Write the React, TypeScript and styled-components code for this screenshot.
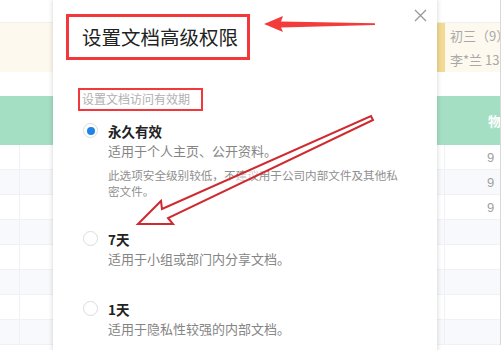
import React from 'react';
import styled, { createGlobalStyle } from 'styled-components';

const GlobalStyle = createGlobalStyle`
   html, body {
      margin: 0;
      padding: 0;
      background: #ffffff;
      overflow: hidden;
   }
   body {
      font-family: "Noto Sans CJK SC", "Noto Sans", "Liberation Sans", sans-serif;
   }
`;

const options = [
   {
      label: '永久有效',
      desc: '适用于个人主页、公开资料。',
      note: '此选项安全级别较低，不建议用于公司内部文件及其他私密文件。',
      checked: true,
   },
   { label: '7天', desc: '适用于小组或部门内分享文档。', checked: false },
   { label: '1天', desc: '适用于隐私性较强的内部文档。', checked: false },
];

const tableRows = ['9', '9', '9', '', '', '', '', ''];

const App = () => {
   return (
      <>
         <GlobalStyle />
         <Screen>
            <Sheet>
               <TopBar />
               <InfoBand>
                  <InfoSpacer />
                  <InfoCard>
                     <InfoLine>初三（9）班</InfoLine>
                     <InfoLine>李*兰 13</InfoLine>
                  </InfoCard>
               </InfoBand>
               <Gap />
               <HeadRow>
                  <HeadCell />
                  <HeadCell />
                  <HeadCell>物理</HeadCell>
               </HeadRow>
               {tableRows.map((v, i) => (
                  <Row key={i} $alt={i % 2 === 1}>
                     <Cell />
                     <Cell />
                     <Cell $value>{v}</Cell>
                  </Row>
               ))}
            </Sheet>

            <Modal>
               <CloseButton aria-label="close">
                  <svg width="13" height="13" viewBox="0 0 13 13">
                     <path d="M1 1 L12 12 M12 1 L1 12" stroke="#9a9a9a" strokeWidth="1.4" fill="none" />
                  </svg>
               </CloseButton>
               <Title>设置文档高级权限</Title>
               <Subtitle>设置文档访问有效期</Subtitle>
               <OptionList>
                  {options.map((o) => (
                     <Option key={o.label}>
                        <Radio $checked={o.checked} />
                        <OptionBody>
                           <OptionLabel>{o.label}</OptionLabel>
                           <OptionDesc>{o.desc}</OptionDesc>
                           {o.note && <OptionNote>{o.note}</OptionNote>}
                        </OptionBody>
                     </Option>
                  ))}
               </OptionList>
            </Modal>

            <Annotations width="501" height="350" viewBox="0 0 501 350">
               <polygon
                  points="264,24 283,16 281,21.5 375,23.3 375,25 281,27.5 283,32"
                  fill="#f23b3b"
               />
               <polygon
                  points="138,224 161,201 162,209 371,116 373,120 168,218 173,224"
                  fill="rgba(255,255,255,0.55)"
                  stroke="#cf2a30"
                  strokeWidth="2"
                  strokeLinejoin="miter"
               />
            </Annotations>
         </Screen>
      </>
   );
};

const Screen = styled.div`
   position: relative;
   width: 501px;
   height: 350px;
   overflow: hidden;
   background: #ffffff;
`;

const Sheet = styled.div`
   display: flex;
   flex-direction: column;
   width: 501px;
   border-right: 1px solid #d8d8d8;
   box-sizing: border-box;
`;

const TopBar = styled.div`
   height: 22px;
   border-bottom: 1px solid #f0f0f0;
`;

const InfoBand = styled.div`
   display: flex;
   height: 49px;
   background: #fdf9ee;
`;

const InfoSpacer = styled.div`
   width: 437px;
`;

const InfoCard = styled.div`
   flex: 1;
   display: flex;
   flex-direction: column;
   justify-content: center;
   gap: 6px;
   border-left: 8px solid #f2da95;
   padding-left: 5px;
   overflow: hidden;
   white-space: nowrap;
`;

const InfoLine = styled.div`
   font-size: 13px;
   line-height: 18px;
   color: #a8a8a8;
`;

const Gap = styled.div`
   height: 24px;
`;

const HeadRow = styled.div`
   display: grid;
   grid-template-columns: 20px 468px 1fr;
   height: 49px;
   background: #a5dfc3;
`;

const HeadCell = styled.div`
   display: flex;
   align-items: center;
   overflow: hidden;
   white-space: nowrap;
   font-size: 13px;
   font-weight: 700;
   color: #ffffff;
`;

const Row = styled.div<{ $alt: boolean }>`
   display: grid;
   grid-template-columns: 20px 425px 1fr;
   height: 24px;
   background: ${({ $alt }) => ($alt ? '#f8f9fc' : '#ffffff')};
   border-bottom: 1px solid #eff1f4;
`;

const Cell = styled.div<{ $value?: boolean }>`
   border-right: ${({ $value }) => ($value ? 'none' : '1px solid #f0f1f4')};
   display: flex;
   align-items: center;
   padding-left: ${({ $value }) => ($value ? '42px' : '0')};
   font-family: "Liberation Sans", sans-serif;
   font-size: 13px;
   color: #a0a0a0;
   overflow: hidden;
`;

const Modal = styled.div`
   position: absolute;
   left: 53px;
   top: 0;
   width: 384px;
   height: 360px;
   background: #ffffff;
   box-shadow: 0 0 5px rgba(0, 0, 0, 0.18);
   padding: 14px 25px 0;
   box-sizing: border-box;
   display: flex;
   flex-direction: column;
   align-items: flex-start;
`;

const CloseButton = styled.button`
   position: absolute;
   top: 9px;
   right: 10px;
   width: 13px;
   height: 13px;
   padding: 0;
   border: none;
   background: none;
   display: flex;
`;

const Title = styled.div`
   margin-left: -12px;
   height: 46px;
   box-sizing: border-box;
   border: 3px solid #f2383a;
   padding: 0 9px 0 13px;
   font-size: 19.5px;
   line-height: 40px;
   color: #222222;
   white-space: nowrap;
`;

const Subtitle = styled.div`
   margin-top: 28px;
   height: 23px;
   box-sizing: border-box;
   border: 2px solid #f2383a;
   padding: 0 11px 0 2px;
   font-size: 12px;
   line-height: 18px;
   color: #b0b0b0;
   white-space: nowrap;
`;

const OptionList = styled.div`
   margin-top: 10px;
   display: flex;
   flex-direction: column;
   gap: 30px;
   padding-left: 5px;
`;

const Option = styled.div`
   display: flex;
   gap: 10px;
   align-items: flex-start;
`;

const Radio = styled.span<{ $checked: boolean }>`
   flex: none;
   margin-top: 2px;
   width: 15px;
   height: 15px;
   box-sizing: border-box;
   border-radius: 50%;
   border: 1px solid #dcdcdc;
   background: #ffffff;
   display: flex;
   align-items: center;
   justify-content: center;

   &::after {
      content: '';
      width: 8px;
      height: 8px;
      border-radius: 50%;
      background: ${({ $checked }) => ($checked ? '#1e84e6' : 'transparent')};
   }
`;

const OptionBody = styled.div`
   display: flex;
   flex-direction: column;
   width: 300px;
`;

const OptionLabel = styled.div`
   font-size: 13.5px;
   line-height: 20px;
   font-weight: 700;
   color: #222222;
`;

const OptionDesc = styled.div`
   font-size: 13px;
   line-height: 20px;
   color: #858585;
   white-space: nowrap;
`;

const OptionNote = styled.div`
   margin-top: 6px;
   font-size: 11.6px;
   line-height: 16px;
   color: #8f8f8f;
   width: 296px;
`;

const Annotations = styled.svg`
   position: absolute;
   left: 0;
   top: 0;
   pointer-events: none;
`;

export default App;
